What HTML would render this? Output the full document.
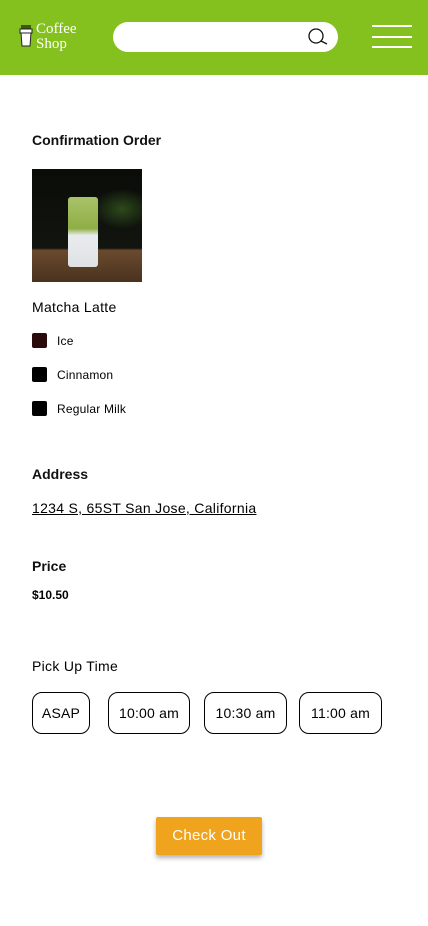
<!DOCTYPE html>
<html><head><meta charset="utf-8"><style>
*{margin:0;padding:0;box-sizing:border-box}
body{width:428px;height:926px;background:#fff;font-family:"Liberation Sans",sans-serif;color:#000;position:relative;overflow:hidden}
.hdr{position:absolute;left:0;top:0;width:428px;height:75px;background:#84c01e}
.abs{position:absolute}
.logo{left:36px;top:22px;color:#fff;font-family:"Liberation Serif",serif;font-size:15px;line-height:15px}
.search{left:113px;top:22px;width:225px;height:30px;background:#fff;border-radius:15px}
.bar{left:372px;width:40px;height:2px;background:#fff}
.h{font-weight:bold;font-size:14px;color:#111}
.sw{left:32px;width:15px;height:15px;border-radius:2px;background:#000}
.opt{left:57px;font-size:12px;letter-spacing:.2px}
.t{position:absolute;top:692px;height:42px;border:1px solid #000;border-radius:10px;font-size:14px;line-height:40px;text-align:center;letter-spacing:.2px}
</style></head><body>
<div class="hdr"></div>
<svg class="abs" style="left:19px;top:24px" width="14" height="24" viewBox="0 0 14 24"><rect x="2" y="1" width="10" height="4" fill="#3a5a10"/><path d="M1 5h12v4h-12z" fill="#fff" stroke="#222" stroke-width="1"/><path d="M2 9h10l-1 13h-8z" fill="#fff" stroke="#222" stroke-width="1"/></svg>
<div class="abs logo">Coffee<br>Shop</div>
<div class="abs search"></div>
<svg class="abs" style="left:307px;top:27px" width="22" height="20" viewBox="0 0 22 20"><circle cx="9" cy="9" r="7" fill="none" stroke="#111" stroke-width="1.3"/><path d="M14 14l6 3" stroke="#111" stroke-width="1.3"/></svg>
<div class="abs bar" style="top:25px"></div>
<div class="abs bar" style="top:36px"></div>
<div class="abs bar" style="top:46px"></div>
<div class="abs h" style="left:32px;top:132px">Confirmation Order</div>
<div class="abs" style="left:32px;top:169px;width:110px;height:113px;background:radial-gradient(ellipse 30px 20px at 90px 40px,#2d4a1a,transparent),linear-gradient(#0a0c08 0,#121410 70%,#6a4a2e 72%,#4a321e 100%)"></div>
<div class="abs" style="left:68px;top:197px;width:30px;height:70px;border-radius:3px;background:linear-gradient(#a9c36a 0,#8fae45 45%,#e9ecee 55%,#dfe2e4 100%)"></div>
<div class="abs" style="left:32px;top:299px;font-size:14px;letter-spacing:.3px">Matcha Latte</div>
<div class="abs sw" style="top:333px;background:#2a0a0a"></div><div class="abs opt" style="top:334px">Ice</div>
<div class="abs sw" style="top:367px"></div><div class="abs opt" style="top:368px">Cinnamon</div>
<div class="abs sw" style="top:401px"></div><div class="abs opt" style="top:402px">Regular Milk</div>
<div class="abs h" style="left:32px;top:466px">Address</div>
<div class="abs" style="left:32px;top:500px;font-size:14px;text-decoration:underline;letter-spacing:.3px">1234 S, 65ST San Jose, California</div>
<div class="abs h" style="left:32px;top:558px">Price</div>
<div class="abs" style="left:32px;top:588px;font-size:12px;font-weight:bold">$10.50</div>
<div class="abs" style="left:32px;top:658px;font-size:14px;letter-spacing:.3px">Pick Up Time</div>
<div class="t" style="left:32px;width:58px">ASAP</div>
<div class="t" style="left:108px;width:82px">10:00 am</div>
<div class="t" style="left:204px;width:83px">10:30 am</div>
<div class="t" style="left:299px;width:83px">11:00 am</div>
<div class="abs" style="left:156px;top:817px;width:106px;height:38px;background:#f0a31c;border-radius:2px;box-shadow:0 3px 5px rgba(0,0,0,.3);color:#fff;font-size:15px;line-height:38px;text-align:center;letter-spacing:.3px">Check Out</div>
</body></html>
